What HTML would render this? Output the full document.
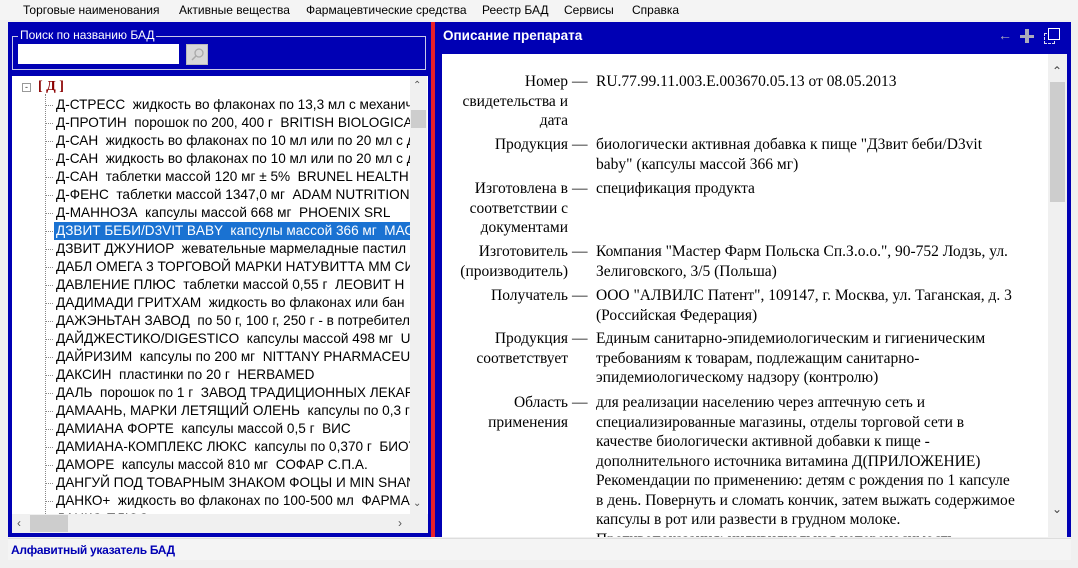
<!DOCTYPE html>
<html><head><meta charset="utf-8"><style>
*{margin:0;padding:0;box-sizing:border-box}
body{width:1078px;height:568px;background:#f0f0f0;position:relative;overflow:hidden;font-family:"Liberation Sans","DejaVu Sans",sans-serif}
.menu{position:absolute;left:0;top:0;width:1078px;height:20px;background:#f4f4f4;font-size:12px;color:#000}
.menu span{position:absolute;top:3px}
.lp{position:absolute;left:8px;top:22px;width:423px;height:515px;background:#0000b4}
.rp{position:absolute;left:435px;top:22px;width:636px;height:515px;background:#0000b4}
.red{position:absolute;left:431px;top:22px;width:4px;height:515px;background:#e8202a}
.gb{position:absolute;left:12px;top:36px;width:414px;height:34px;border:1px solid #c8c8e8}
.gbt{position:absolute;left:18px;top:28px;background:#0000b4;color:#fff;font-size:12px;padding:0 2px}
.inp{position:absolute;left:18px;top:44px;width:161px;height:20px;background:#fff}
.btn{position:absolute;left:186px;top:44px;width:22px;height:21px;background:#d8d8d8;border:1px solid #bbb}
.tree{position:absolute;left:12px;top:76px;width:416px;height:457px;background:#fff;overflow:hidden;font-size:13.6px}
.row{position:absolute;left:42px;height:18px;line-height:18px;white-space:nowrap;padding-left:2px;color:#000}
.row:before{content:"";position:absolute;left:-8px;top:9px;width:7px;border-top:1px dotted #888}
.sel{background:#1a72d2;color:#fff}
.vl{position:absolute;left:33px;top:18px;height:440px;border-left:1px dotted #888}
.vs{position:absolute;left:398px;top:0;width:17px;height:438px;background:#f0f0f0}
.hs{position:absolute;left:0;top:438px;width:416px;height:19px;background:#f0f0f0}
.hdr{position:absolute;left:443px;top:28px;color:#fff;font-weight:bold;font-size:13.5px}
.cont{position:absolute;left:442px;top:54px;width:625px;height:483px;background:#fff;overflow:hidden;font-family:"Liberation Serif","DejaVu Serif",serif;font-size:15.5px;line-height:19.5px}
.cs{position:absolute;right:0;top:0;width:19px;height:483px;background:#f0f0f0}
.cs .th{position:absolute;left:2px;top:28px;width:15px;height:120px;background:#cdcdcd}
.it{position:absolute;left:0;width:600px}
.lb{position:absolute;left:0;width:126px;text-align:right}
.ds{position:absolute;left:130px}
.vv{position:absolute;left:154px;width:450px;white-space:nowrap}
.status{position:absolute;left:8px;top:538px;width:1063px;height:22px;background:#f4f4f4;border-top:1px solid #ddd}
.status span{position:absolute;left:3px;top:4px;color:#0000b4;font-size:12px;font-weight:bold;letter-spacing:-0.3px}
</style></head><body>
<div class="menu"><span style="left:23px">Торговые наименования</span><span style="left:179px">Активные вещества</span><span style="left:306px">Фармацевтические средства</span><span style="left:482px">Реестр БАД</span><span style="left:564px">Сервисы</span><span style="left:632px">Справка</span></div>
<div class="lp"></div><div class="red"></div><div class="rp"></div>
<div class="gb"></div><div class="gbt">Поиск по названию БАД</div>
<div class="inp"></div><div class="btn"><svg width="20" height="19"><circle cx="12" cy="8" r="4" fill="none" stroke="#aaa" stroke-width="1.3"/><line x1="9" y1="11" x2="5" y2="15" stroke="#aaa" stroke-width="1.5"/></svg></div>
<div class="tree">
<div class="vl"></div>
<div style="position:absolute;left:10px;top:7px;width:9px;height:9px;border:1px solid #999;font-size:9px;line-height:6px;text-align:center;color:#333">-</div>
<div style="position:absolute;left:26px;top:3px;color:#8b0000;font-weight:bold;font-family:'Liberation Serif',serif;font-size:14px">[ Д ]</div>
<div class="row" style="top:20px">Д-СТРЕСС &nbsp;жидкость во флаконах по 13,3 мл с механич</div>
<div class="row" style="top:38px">Д-ПРОТИН &nbsp;порошок по 200, 400 г &nbsp;BRITISH BIOLOGICAL</div>
<div class="row" style="top:56px">Д-САН &nbsp;жидкость во флаконах по 10 мл или по 20 мл с д</div>
<div class="row" style="top:74px">Д-САН &nbsp;жидкость во флаконах по 10 мл или по 20 мл с д</div>
<div class="row" style="top:92px">Д-САН &nbsp;таблетки массой 120 мг ± 5% &nbsp;BRUNEL HEALTH</div>
<div class="row" style="top:110px">Д-ФЕНС &nbsp;таблетки массой 1347,0 мг &nbsp;ADAM NUTRITION</div>
<div class="row" style="top:128px">Д-МАННОЗА &nbsp;капсулы массой 668 мг &nbsp;PHOENIX SRL</div>
<div class="row sel" style="top:146px;width:356px">ДЗВИТ БЕБИ/D3VIT BABY &nbsp;капсулы массой 366 мг &nbsp;МАС</div>
<div class="row" style="top:164px">ДЗВИТ ДЖУНИОР &nbsp;жевательные мармеладные пастил</div>
<div class="row" style="top:182px">ДАБЛ ОМЕГА 3 ТОРГОВОЙ МАРКИ НАТУВИТТА ММ СИ</div>
<div class="row" style="top:200px">ДАВЛЕНИЕ ПЛЮС &nbsp;таблетки массой 0,55 г &nbsp;ЛЕОВИТ Н</div>
<div class="row" style="top:218px">ДАДИМАДИ ГРИТХАМ &nbsp;жидкость во флаконах или бан</div>
<div class="row" style="top:236px">ДАЖЭНЬТАН ЗАВОД &nbsp;по 50 г, 100 г, 250 г - в потребител</div>
<div class="row" style="top:254px">ДАЙДЖЕСТИКО/DIGESTICO &nbsp;капсулы массой 498 мг &nbsp;U</div>
<div class="row" style="top:272px">ДАЙРИЗИМ &nbsp;капсулы по 200 мг &nbsp;NITTANY PHARMACEU</div>
<div class="row" style="top:290px">ДАКСИН &nbsp;пластинки по 20 г &nbsp;HERBAMED</div>
<div class="row" style="top:308px">ДАЛЬ &nbsp;порошок по 1 г &nbsp;ЗАВОД ТРАДИЦИОННЫХ ЛЕКАР</div>
<div class="row" style="top:326px">ДАМААНЬ, МАРКИ ЛЕТЯЩИЙ ОЛЕНЬ &nbsp;капсулы по 0,3 г</div>
<div class="row" style="top:344px">ДАМИАНА ФОРТЕ &nbsp;капсулы массой 0,5 г &nbsp;ВИС</div>
<div class="row" style="top:362px">ДАМИАНА-КОМПЛЕКС ЛЮКС &nbsp;капсулы по 0,370 г &nbsp;БИОТ</div>
<div class="row" style="top:380px">ДАМОРЕ &nbsp;капсулы массой 810 мг &nbsp;СОФАР С.П.А.</div>
<div class="row" style="top:398px">ДАНГУЙ ПОД ТОВАРНЫМ ЗНАКОМ ФОЦЫ И MIN SHAN</div>
<div class="row" style="top:416px">ДАНКО+ &nbsp;жидкость во флаконах по 100-500 мл &nbsp;ФАРМА</div>
<div class="row" style="top:434px">ДАНКО ПЛЮС</div>
<div class="vs"><div style="position:absolute;left:3px;top:4px;font-size:10px;color:#555">&#8963;</div><div style="position:absolute;left:1px;top:34px;width:15px;height:18px;background:#cdcdcd"></div><div style="position:absolute;left:3px;top:422px;font-size:10px;color:#555">&#8964;</div></div>
<div class="hs"><div style="position:absolute;left:5px;top:2px;font-size:12px;color:#555">‹</div><div style="position:absolute;left:18px;top:1px;width:38px;height:17px;background:#cdcdcd"></div><div style="position:absolute;left:386px;top:2px;font-size:12px;color:#555">›</div></div>
</div>
<div class="hdr">Описание препарата</div>
<div style="position:absolute;left:998px;top:27px;color:#aab;font-size:14px">←</div>
<div style="position:absolute;left:1020px;top:35px;width:14px;height:3px;background:#aab"></div>
<div style="position:absolute;left:1025px;top:29px;width:4px;height:14px;background:#aab"></div>
<div style="position:absolute;left:1044px;top:33px;width:11px;height:11px;border:1px dashed #dde"></div>
<div style="position:absolute;left:1048px;top:28px;width:12px;height:12px;border:1.5px solid #fff;background:#0000b4"></div>
<div class="cont">
<div class="it" style="top:18px"><div class="lb">Номер свидетельства и дата</div><div class="ds">—</div><div class="vv">RU.77.99.11.003.E.003670.05.13 от 08.05.2013</div></div>
<div class="it" style="top:81px"><div class="lb">Продукция</div><div class="ds">—</div><div class="vv">биологически активная добавка к пище "Д3вит беби/D3vit<br>baby" (капсулы массой 366 мг)</div></div>
<div class="it" style="top:125px"><div class="lb">Изготовлена в соответствии с документами</div><div class="ds">—</div><div class="vv">спецификация продукта</div></div>
<div class="it" style="top:188px"><div class="lb">Изготовитель (производитель)</div><div class="ds">—</div><div class="vv">Компания "Мастер Фарм Польска Сп.З.о.о.", 90-752 Лодзь, ул.<br>Зелиговского, 3/5 (Польша)</div></div>
<div class="it" style="top:232px"><div class="lb">Получатель</div><div class="ds">—</div><div class="vv">ООО "АЛВИЛС Патент", 109147, г. Москва, ул. Таганская, д. 3<br>(Российская Федерация)</div></div>
<div class="it" style="top:275px"><div class="lb">Продукция соответствует</div><div class="ds">—</div><div class="vv">Единым санитарно-эпидемиологическим и гигиеническим<br>требованиям к товарам, подлежащим санитарно-<br>эпидемиологическому надзору (контролю)</div></div>
<div class="it" style="top:339px"><div class="lb">Область применения</div><div class="ds">—</div><div class="vv">для реализации населению через аптечную сеть и<br>специализированные магазины, отделы торговой сети в<br>качестве биологически активной добавки к пище -<br>дополнительного источника витамина Д(ПРИЛОЖЕНИЕ)<br>Рекомендации по применению: детям с рождения по 1 капсуле<br>в день. Повернуть и сломать кончик, затем выжать содержимое<br>капсулы в рот или развести в грудном молоке.<br>Противопоказания: индивидуальная непереносимость</div></div>
<div class="cs"><div style="position:absolute;left:4px;top:8px;font-size:12px;color:#444">&#8963;</div><div class="th"></div><div style="position:absolute;left:4px;top:446px;font-size:12px;color:#444">&#8964;</div></div>
</div>
<div class="status"><span>Алфавитный указатель БАД</span></div>
</body></html>
